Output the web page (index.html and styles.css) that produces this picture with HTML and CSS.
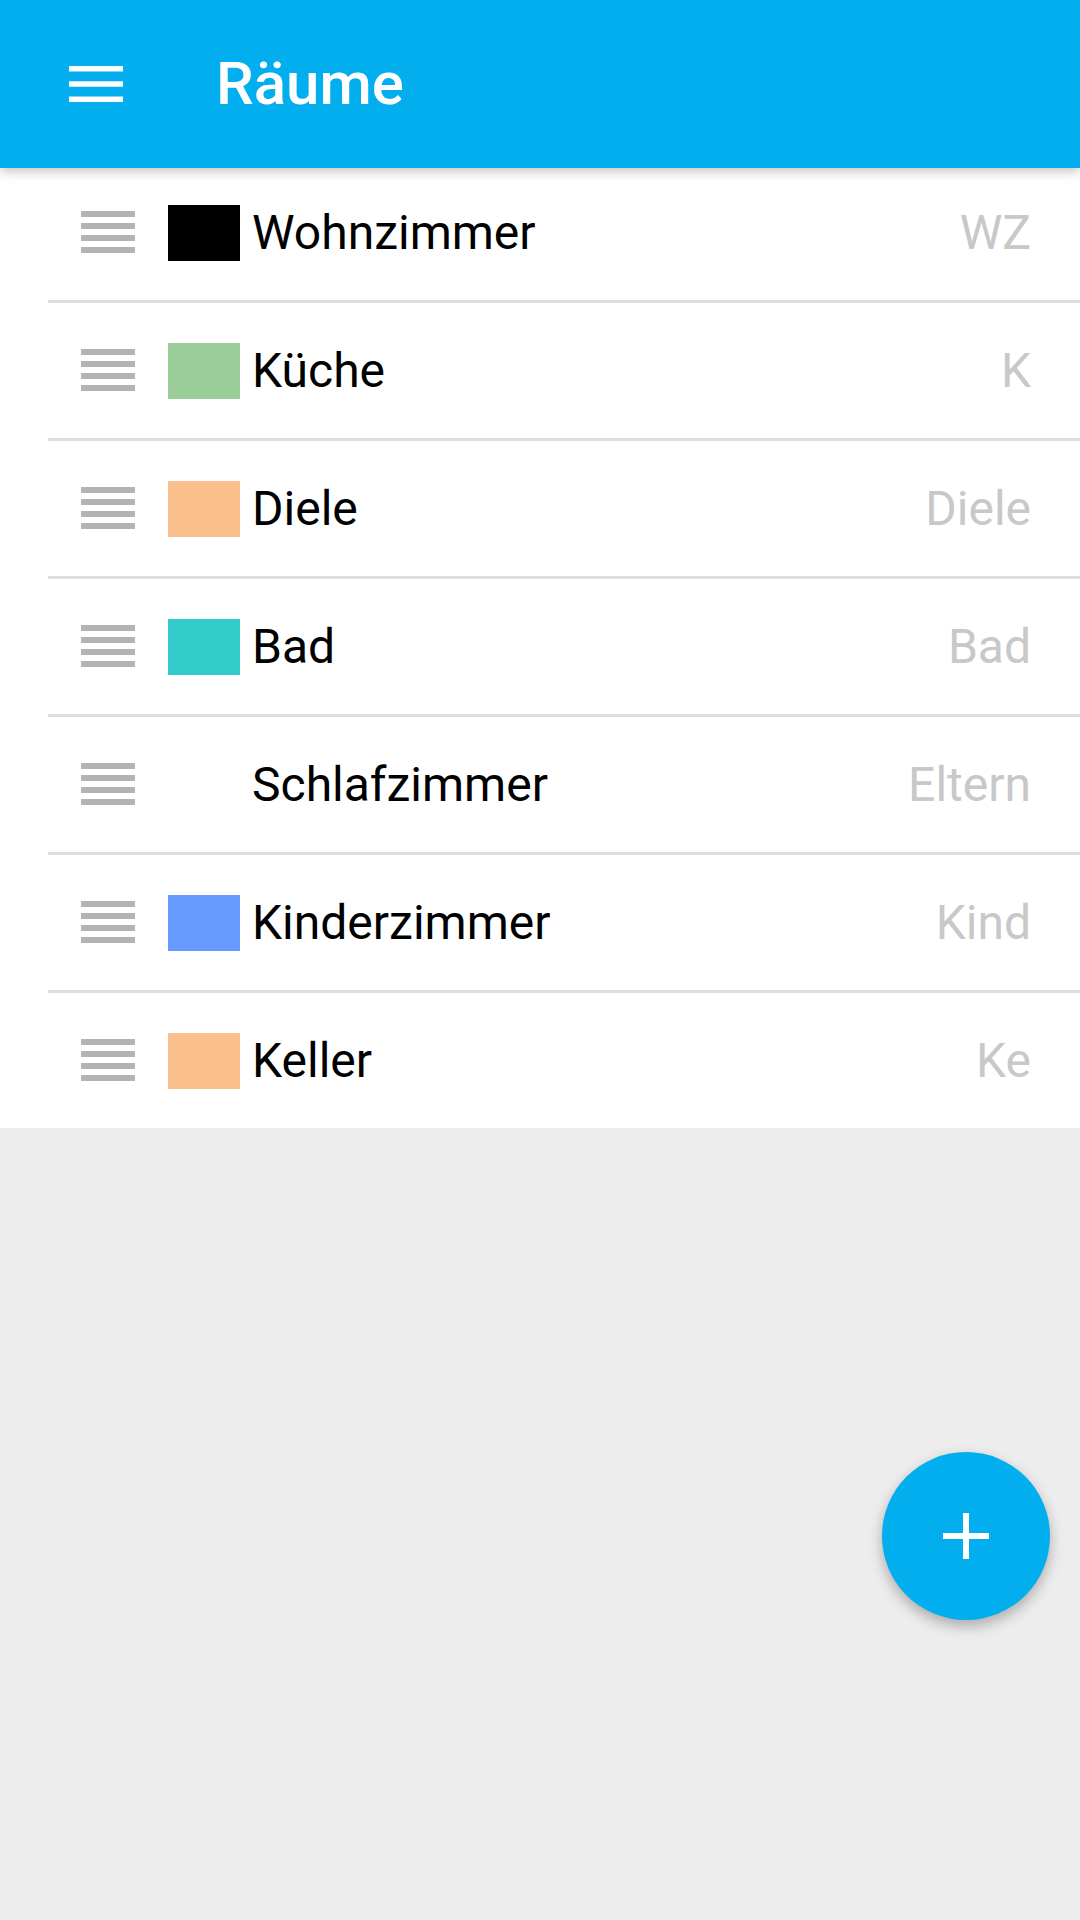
FILE: index.html
```html
<!DOCTYPE html>
<html lang="de">
<head>
<meta charset="utf-8">
<title>Räume</title>
<link rel="stylesheet" href="styles.css">
</head>
<body>
<div class="app">
  <header class="toolbar">
    <button class="nav-btn" aria-label="Menü">
      <svg viewBox="0 0 24 24" width="72" height="72"><path d="M3 6h18v1.8H3zM3 11.1h18v1.8H3zM3 16.2h18V18H3z" fill="#fff"/></svg>
    </button>
    <h1 class="title">Räume</h1>
  </header>

  <ul class="rooms">
    <li class="room">
      <span class="handle"><svg viewBox="0 0 24 24" width="72" height="72"><path d="M3 5h18v2H3zM3 9h18v2H3zM3 13h18v2H3zM3 17h18v2H3z" fill="#b3b3b3"/></svg></span>
      <span class="swatch swatch-black"></span>
      <span class="name">Wohnzimmer</span>
      <span class="short">WZ</span>
    </li>
    <li class="room">
      <span class="handle"><svg viewBox="0 0 24 24" width="72" height="72"><path d="M3 5h18v2H3zM3 9h18v2H3zM3 13h18v2H3zM3 17h18v2H3z" fill="#b3b3b3"/></svg></span>
      <span class="swatch swatch-green"></span>
      <span class="name">Küche</span>
      <span class="short">K</span>
    </li>
    <li class="room">
      <span class="handle"><svg viewBox="0 0 24 24" width="72" height="72"><path d="M3 5h18v2H3zM3 9h18v2H3zM3 13h18v2H3zM3 17h18v2H3z" fill="#b3b3b3"/></svg></span>
      <span class="swatch swatch-peach"></span>
      <span class="name">Diele</span>
      <span class="short">Diele</span>
    </li>
    <li class="room">
      <span class="handle"><svg viewBox="0 0 24 24" width="72" height="72"><path d="M3 5h18v2H3zM3 9h18v2H3zM3 13h18v2H3zM3 17h18v2H3z" fill="#b3b3b3"/></svg></span>
      <span class="swatch swatch-teal"></span>
      <span class="name">Bad</span>
      <span class="short">Bad</span>
    </li>
    <li class="room">
      <span class="handle"><svg viewBox="0 0 24 24" width="72" height="72"><path d="M3 5h18v2H3zM3 9h18v2H3zM3 13h18v2H3zM3 17h18v2H3z" fill="#b3b3b3"/></svg></span>
      <span class="swatch swatch-none"></span>
      <span class="name">Schlafzimmer</span>
      <span class="short">Eltern</span>
    </li>
    <li class="room">
      <span class="handle"><svg viewBox="0 0 24 24" width="72" height="72"><path d="M3 5h18v2H3zM3 9h18v2H3zM3 13h18v2H3zM3 17h18v2H3z" fill="#b3b3b3"/></svg></span>
      <span class="swatch swatch-blue"></span>
      <span class="name">Kinderzimmer</span>
      <span class="short">Kind</span>
    </li>
    <li class="room">
      <span class="handle"><svg viewBox="0 0 24 24" width="72" height="72"><path d="M3 5h18v2H3zM3 9h18v2H3zM3 13h18v2H3zM3 17h18v2H3z" fill="#b3b3b3"/></svg></span>
      <span class="swatch swatch-peach"></span>
      <span class="name">Keller</span>
      <span class="short">Ke</span>
    </li>
  </ul>

  <button class="fab" aria-label="Raum hinzufügen">
    <svg viewBox="0 0 46 46" width="46" height="46"><path d="M20 0h6v20h20v6H26v20h-6V26H0v-6h20z" fill="#fff"/></svg>
  </button>
</div>
</body>
</html>
```

FILE: styles.css
```css
* {
  box-sizing: border-box;
}

html, body {
  margin: 0;
  padding: 0;
}

body {
  width: 1080px;
  height: 1920px;
  background: #ededed;
  font-family: Roboto, "Noto Sans", "Liberation Sans", sans-serif;
  overflow: hidden;
}

.app {
  position: relative;
  width: 1080px;
  height: 1920px;
}

.toolbar {
  position: relative;
  z-index: 2;
  height: 168px;
  background: #03aeef;
  display: flex;
  align-items: center;
  box-shadow: 0 4px 10px rgba(0, 0, 0, 0.22);
}

.nav-btn {
  width: 72px;
  height: 72px;
  margin-left: 60px;
  padding: 0;
  border: 0;
  background: none;
  display: flex;
}

.title {
  margin: 0 0 0 84px;
  color: #fff;
  font-size: 60px;
  font-weight: 500;
  line-height: 1;
}

.rooms {
  position: relative;
  z-index: 1;
  list-style: none;
  margin: -3px 0 0 0;
  padding: 0;
  background: #fff;
}

.room {
  height: 138px;
  display: flex;
  align-items: center;
  padding: 0 49px 3px 0;
  position: relative;
}

.room::after {
  content: "";
  position: absolute;
  left: 48px;
  right: 0;
  bottom: 0;
  height: 3px;
  background: #dedede;
}

.room:last-child {
  height: 135px;
  padding-bottom: 0;
}

.room:last-child::after {
  display: none;
}

.handle {
  width: 72px;
  height: 72px;
  margin-left: 72px;
  display: flex;
  margin-top: -1px;
}

.swatch {
  width: 72px;
  height: 56px;
  margin-left: 24px;
  flex: none;
}

.swatch-black { background: #000; }
.swatch-green { background: #9acd99; }
.swatch-peach { background: #f9c08e; }
.swatch-teal { background: #33cccb; }
.swatch-blue { background: #669afe; }
.swatch-none { background: transparent; }

.name {
  margin-left: 12px;
  font-size: 48px;
  color: #000;
  flex: 1;
}

.short {
  font-size: 48px;
  color: #c8c8c8;
}

.fab {
  position: absolute;
  left: 882px;
  top: 1452px;
  width: 168px;
  height: 168px;
  border-radius: 50%;
  border: 0;
  padding: 0;
  background: #03aeef;
  display: flex;
  align-items: center;
  justify-content: center;
  box-shadow: 0 6px 14px rgba(0, 0, 0, 0.28);
}
```
